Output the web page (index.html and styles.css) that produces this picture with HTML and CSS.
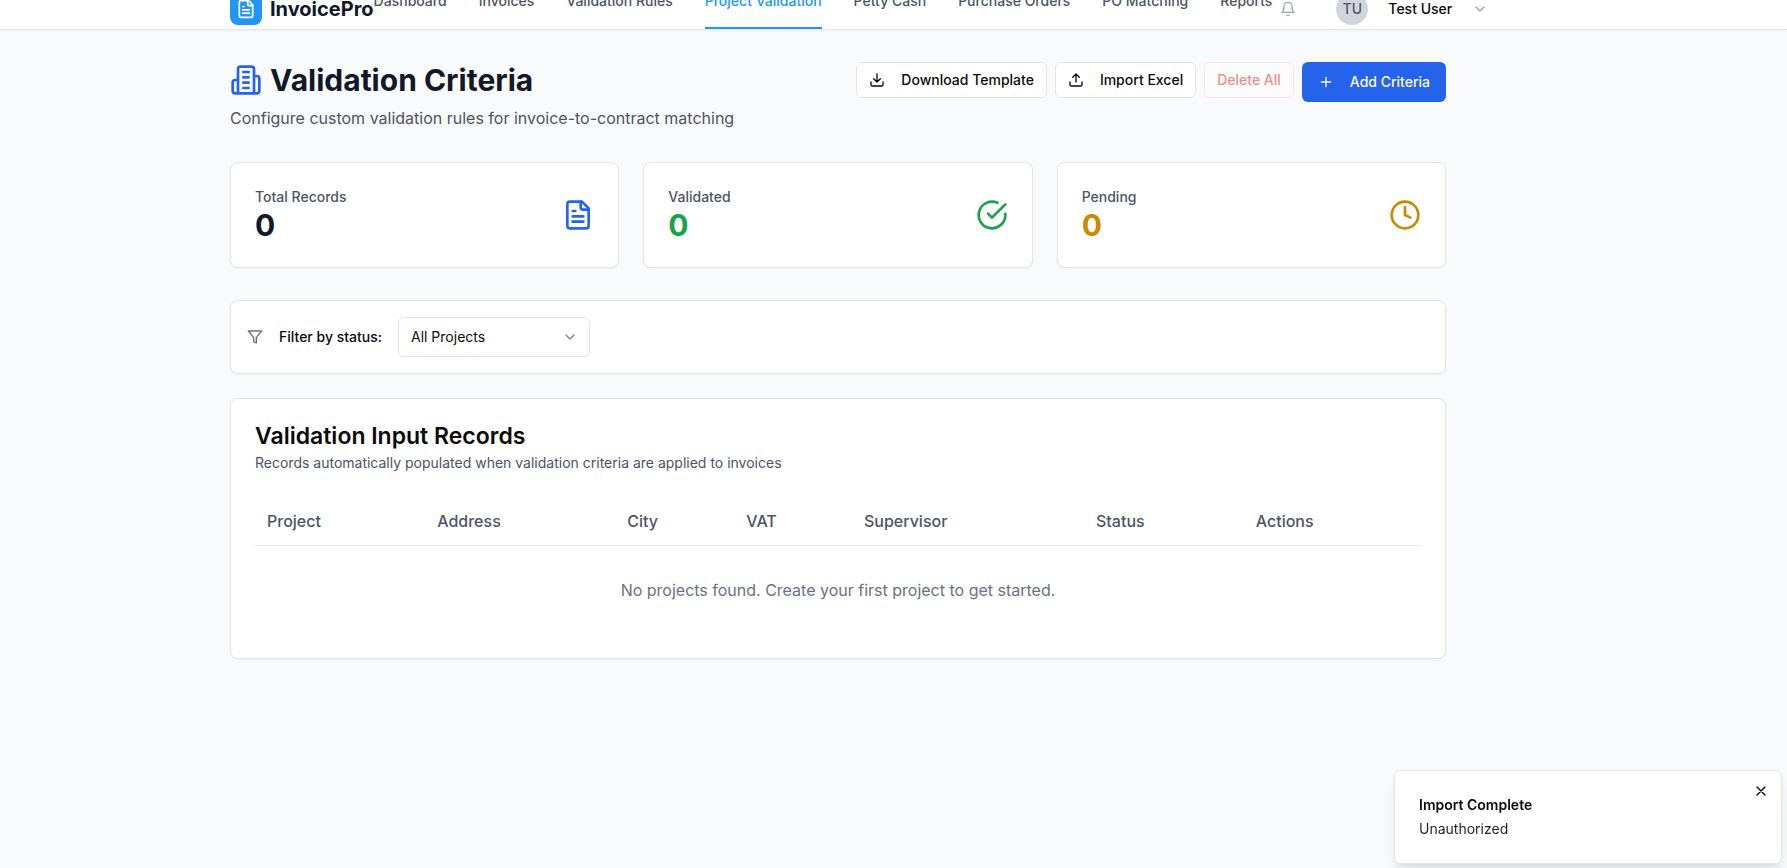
FILE: index.html
```html
<!DOCTYPE html>
<html lang="en">
<head>
<meta charset="utf-8">
<meta name="viewport" content="width=device-width, initial-scale=1">
<title>Validation Criteria - InvoicePro</title>
<link rel="stylesheet" href="styles.css">
</head>
<body>
<header class="topbar">
  <div class="container topbar-inner">
    <a class="brand" href="#">
      <span class="brand-mark"><svg class="icon icon-20" viewBox="0 0 24 24"><path d="M15 2H6a2 2 0 0 0-2 2v16a2 2 0 0 0 2 2h12a2 2 0 0 0 2-2V7Z"/><path d="M14 2v4a2 2 0 0 0 2 2h4M10 9H8M16 13H8M16 17H8"/></svg></span>
      <span>InvoicePro</span>
    </a>
    <nav class="nav">
      <a class="nav-link" href="#">Dashboard</a>
      <a class="nav-link" href="#">Invoices</a>
      <a class="nav-link" href="#">Validation Rules</a>
      <a class="nav-link active" href="#" aria-current="page">Project Validation</a>
      <a class="nav-link" href="#">Petty Cash</a>
      <a class="nav-link" href="#">Purchase Orders</a>
      <a class="nav-link" href="#">PO Matching</a>
      <a class="nav-link" href="#">Reports</a>
    </nav>
    <div class="account">
      <button class="icon-button" type="button" aria-label="Notifications"><svg class="icon icon-16" viewBox="0 0 24 24"><path d="M6 8a6 6 0 0 1 12 0c0 7 3 9 3 9H3s3-2 3-9M10.3 21a1.94 1.94 0 0 0 3.4 0"/></svg></button>
      <button class="user-button" type="button">
        <span class="avatar">TU</span>
        <span>Test User</span>
        <svg class="icon icon-16 muted" viewBox="0 0 24 24"><path d="m6 9 6 6 6-6"/></svg>
      </button>
    </div>
  </div>
</header>

<main class="page">
  <div class="container">
    <div class="page-head">
      <div>
        <h1 class="page-title"><svg class="icon icon-32 blue" viewBox="0 0 24 24"><path d="M6 22V4a2 2 0 0 1 2-2h8a2 2 0 0 1 2 2v18ZM6 12H4a2 2 0 0 0-2 2v6a2 2 0 0 0 2 2h2M18 9h2a2 2 0 0 1 2 2v9a2 2 0 0 1-2 2h-2M10 6h4M10 10h4M10 14h4M10 18h4"/></svg>Validation Criteria</h1>
        <p class="page-subtitle">Configure custom validation rules for invoice-to-contract matching</p>
      </div>
      <div class="actions">
        <button class="button" type="button"><svg class="icon icon-16" viewBox="0 0 24 24"><path d="M21 15v4a2 2 0 0 1-2 2H5a2 2 0 0 1-2-2v-4M7 10l5 5 5-5M12 15V3"/></svg>Download Template</button>
        <button class="button" type="button"><svg class="icon icon-16" viewBox="0 0 24 24"><path d="M21 15v4a2 2 0 0 1-2 2H5a2 2 0 0 1-2-2v-4M17 8l-5-5-5 5M12 3v12"/></svg>Import Excel</button>
        <button class="button danger" type="button" disabled>Delete All</button>
        <button class="button primary" type="button"><svg class="icon icon-16" viewBox="0 0 24 24"><path d="M5 12h14M12 5v14"/></svg>Add Criteria</button>
      </div>
    </div>

    <section class="stats">
      <div class="card stat">
        <div><p class="stat-label">Total Records</p><p class="stat-value">0</p></div>
        <svg class="icon icon-32 blue" viewBox="0 0 24 24"><path d="M15 2H6a2 2 0 0 0-2 2v16a2 2 0 0 0 2 2h12a2 2 0 0 0 2-2V7Z"/><path d="M14 2v4a2 2 0 0 0 2 2h4M10 9H8M16 13H8M16 17H8"/></svg>
      </div>
      <div class="card stat">
        <div><p class="stat-label">Validated</p><p class="stat-value green">0</p></div>
        <svg class="icon icon-32 green" viewBox="0 0 24 24"><path d="M22 11.08V12a10 10 0 1 1-5.93-9.14"/><path d="m9 11 3 3L22 4"/></svg>
      </div>
      <div class="card stat">
        <div><p class="stat-label">Pending</p><p class="stat-value amber">0</p></div>
        <svg class="icon icon-32 amber" viewBox="0 0 24 24"><circle cx="12" cy="12" r="10"/><path d="M12 6v6l4 2"/></svg>
      </div>
    </section>

    <section class="card filter">
      <svg class="icon icon-16 gray" viewBox="0 0 24 24"><path d="M22 3H2l8 9.46V19l4 2v-8.54L22 3z"/></svg>
      <label class="filter-label" for="status">Filter by status:</label>
      <div class="select-wrap">
        <select class="select" id="status"><option>All Projects</option><option>Validated</option><option>Pending</option></select>
        <svg class="icon icon-16 select-chevron" viewBox="0 0 24 24"><path d="m6 9 6 6 6-6"/></svg>
      </div>
    </section>

    <section class="card records">
      <h2 class="card-title">Validation Input Records</h2>
      <p class="card-text">Records automatically populated when validation criteria are applied to invoices</p>
      <table class="table">
        <colgroup><col class="col-project"><col class="col-address"><col class="col-city"><col class="col-vat"><col class="col-supervisor"><col class="col-status"><col class="col-actions"></colgroup>
        <thead><tr><th>Project</th><th>Address</th><th>City</th><th>VAT</th><th>Supervisor</th><th>Status</th><th>Actions</th></tr></thead>
        <tbody><tr><td class="empty" colspan="7">No projects found. Create your first project to get started.</td></tr></tbody>
      </table>
    </section>
  </div>
</main>

<div class="toast" role="status">
  <p class="toast-title">Import Complete</p>
  <p class="toast-text">Unauthorized</p>
  <button class="toast-close" type="button" aria-label="Close"><svg class="icon icon-16" viewBox="0 0 24 24"><path d="M18 6 6 18M6 6l12 12"/></svg></button>
</div>
</body>
</html>
```
FILE: styles.css
```css
:root {
  --border: #e7e5e4;
  --text: #0c0a09;
  --heading: #111827;
  --gray: #4b5563;
  --gutter-end: 111px;
}

* { box-sizing: border-box; }

body {
  margin: 0;
  background: #f9fafb;
  color: var(--text);
  font-family: Inter, "Liberation Sans", sans-serif;
  font-size: 16px;
  line-height: 24px;
  overflow-x: hidden;
}

h1, h2, p { margin: 0; }
a { color: inherit; text-decoration: none; }
button, select { font: inherit; color: inherit; }
button { cursor: pointer; }

.icon {
  flex: none;
  display: block;
  fill: none;
  stroke: currentColor;
  stroke-width: 2;
  stroke-linecap: round;
  stroke-linejoin: round;
}
.icon-16 { width: 16px; height: 16px; }
.icon-20 { width: 20px; height: 20px; }
.icon-32 { width: 32px; height: 32px; }
.blue { color: #2563eb; }
.green { color: #16a34a; }
.amber { color: #ca8a04; }
.gray { color: #6b7280; }
.muted { color: #9ca3af; }

.container {
  max-width: 1280px;
  margin: 0 auto;
  padding: 0 32px;
}

.topbar {
  margin-top: -11px;
  padding-right: var(--gutter-end);
  background: #fff;
  border-bottom: 1px solid #e5e7eb;
  box-shadow: 0 1px 2px rgba(0, 0, 0, .05);
}
.topbar-inner {
  display: flex;
  align-items: center;
  height: 40px;
  white-space: nowrap;
}
.brand {
  flex: none;
  display: flex;
  align-items: center;
  gap: 8px;
  color: var(--heading);
  font-size: 20px;
  line-height: 28px;
  font-weight: 700;
}
.brand-mark {
  display: grid;
  place-items: center;
  width: 32px;
  height: 32px;
  border-radius: 8px;
  background: #2196f3;
  color: #fff;
}
.nav {
  flex: none;
  align-self: flex-end;
  display: flex;
  gap: 32px;
}
.nav-link {
  padding-bottom: 16px;
  border-bottom: 2px solid transparent;
  color: var(--gray);
  font-size: 14px;
  line-height: 20px;
  font-weight: 500;
}
.nav-link.active { color: #2196f3; border-color: #2196f3; }
.account {
  flex: none;
  display: flex;
  align-items: center;
  gap: 32px;
}
.icon-button, .user-button { border: 0; background: none; }
.icon-button { padding: 8px; color: #9ca3af; }
.user-button {
  display: flex;
  align-items: center;
  gap: 20px;
  padding: 0;
  font-size: 14px;
  font-weight: 500;
}
.avatar {
  display: grid;
  place-items: center;
  width: 32px;
  height: 32px;
  border-radius: 50%;
  background: #d1d5db;
  color: var(--gray);
}

/* Page heading */
.page { padding: 32px var(--gutter-end) 32px 0; }
.page-head {
  display: flex;
  justify-content: space-between;
  align-items: flex-start;
  margin-bottom: 32px;
}
.page-title {
  display: flex;
  align-items: center;
  gap: 8px;
  color: var(--heading);
  font-size: 30px;
  line-height: 36px;
  font-weight: 700;
}
.page-subtitle { margin-top: 8px; color: var(--gray); }
.actions {
  display: flex;
  align-items: flex-start;
  gap: 8px;
}
.button {
  display: flex;
  align-items: center;
  gap: 16px;
  height: 36px;
  padding: 0 12px;
  border: 1px solid var(--border);
  border-radius: 6px;
  background: #fff;
  font-size: 14px;
  line-height: 20px;
  font-weight: 500;
  white-space: nowrap;
}
.button.danger {
  border-color: #fecaca;
  color: #dc2626;
  opacity: .5;
  cursor: default;
}
.button.primary {
  height: 40px;
  padding: 0 16px;
  border: 0;
  background: #2563eb;
  color: #fafaf9;
}

/* Cards */
.card {
  background: #fff;
  border: 1px solid var(--border);
  border-radius: 8px;
  box-shadow: 0 1px 2px rgba(0, 0, 0, .05);
}
.stats {
  display: grid;
  grid-template-columns: repeat(3, 1fr);
  gap: 24px;
  margin-bottom: 32px;
}
.stat {
  display: flex;
  align-items: center;
  justify-content: space-between;
  padding: 24px;
}
.stat-label {
  color: var(--gray);
  font-size: 14px;
  line-height: 20px;
  font-weight: 500;
}
.stat-value {
  font-size: 30px;
  line-height: 36px;
  font-weight: 700;
}
.stat-value:not(.green):not(.amber) { color: var(--heading); }

.filter {
  display: flex;
  align-items: center;
  gap: 16px;
  margin-bottom: 24px;
  padding: 16px;
  font-size: 14px;
}
.filter-label { font-weight: 500; }
.select-wrap {
  position: relative;
  width: 192px;
}
.select {
  appearance: none;
  display: block;
  width: 100%;
  height: 40px;
  padding: 0 12px;
  border: 1px solid var(--border);
  border-radius: 6px;
  background: #fff;
}
.select-chevron {
  position: absolute;
  top: 12px;
  right: 12px;
  opacity: .5;
  pointer-events: none;
}

.records { padding: 24px; }
.card-title {
  font-size: 23px;
  line-height: 26px;
  font-weight: 600;
}
.card-text {
  margin: 4px 0 24px;
  color: var(--gray);
  font-size: 14px;
  line-height: 20px;
}
.table {
  width: 100%;
  border-collapse: separate;
  border-spacing: 0;
  table-layout: fixed;
}
.table th {
  height: 49px;
  padding: 0 12px;
  border-bottom: 1px solid #e5e7eb;
  color: var(--gray);
  font-weight: 500;
  text-align: left;
}
.table .empty {
  padding: 32px 12px;
  color: #6b7280;
  text-align: center;
}
.col-project { width: 14.6%; }
.col-address { width: 16.3%; }
.col-city { width: 10.2%; }
.col-vat { width: 10.1%; }
.col-supervisor { width: 19.9%; }
.col-status { width: 13.7%; }
.col-actions { width: 15.2%; }

.toast {
  position: fixed;
  right: 5px;
  bottom: 4px;
  width: 388px;
  padding: 24px;
  border: 1px solid var(--border);
  border-radius: 6px;
  background: #fff;
  box-shadow: 0 10px 15px -3px rgba(0, 0, 0, .1), 0 4px 6px -4px rgba(0, 0, 0, .1);
  font-size: 14px;
  line-height: 20px;
}
.toast-title { font-weight: 600; }
.toast-text { margin-top: 4px; opacity: .9; }
.toast-close {
  position: absolute;
  top: 8px;
  right: 8px;
  padding: 4px;
  border: 0;
  background: none;
}
```
